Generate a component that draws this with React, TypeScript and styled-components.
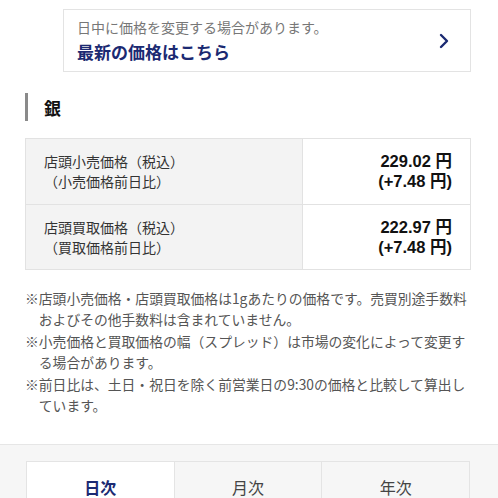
import React from 'react'
import styled, { createGlobalStyle } from 'styled-components'

const GlobalStyle = createGlobalStyle`
    body {
        margin: 0;
        background: #ffffff;
        font-family: "Noto Sans CJK JP", "Noto Sans", sans-serif;
        color: #222222;
    }
`

const Page = styled.div`
    width: 498px;
    height: 498px;
    overflow: hidden;
    display: flex;
    flex-direction: column;
`

const Content = styled.div`
    padding: 9px 27px 0 25px;
    display: flex;
    flex-direction: column;
`

const NoticeCard = styled.a`
    margin-left: 38px;
    height: 63px;
    box-sizing: border-box;
    border: 1px solid #e3e3e3;
    display: flex;
    align-items: center;
    justify-content: space-between;
    padding: 0 20px 0 13px;
    text-decoration: none;
`

const NoticeText = styled.div`
    display: flex;
    flex-direction: column;
`

const NoticeSub = styled.span`
    font-size: 14px;
    line-height: 19px;
    color: #777777;
`

const NoticeLink = styled.span`
    margin-top: 4px;
    font-size: 17px;
    line-height: 22px;
    font-weight: 700;
    color: #1b2a72;
`

const Heading = styled.h2`
    margin: 21px 0 0;
    height: 28px;
    display: flex;
    align-items: center;
    border-left: 3px solid #8a8a8a;
    padding-left: 16px;
    font-size: 17px;
    font-weight: 700;
    color: #111111;
`

const PriceTable = styled.div`
    margin-top: 17px;
    display: grid;
    grid-template-columns: 277px 1fr;
    border-top: 1px solid #e2e2e2;
    border-left: 1px solid #e2e2e2;
`

const Cell = styled.div<{ $head?: boolean }>`
    height: 65.5px;
    box-sizing: border-box;
    border-right: 1px solid #e2e2e2;
    border-bottom: 1px solid #e2e2e2;
    background: ${({ $head }) => ($head ? '#f3f3f3' : '#ffffff')};
    display: flex;
    flex-direction: column;
    justify-content: center;
    align-items: ${({ $head }) => ($head ? 'flex-start' : 'flex-end')};
    padding: ${({ $head }) => ($head ? '0 0 0 18px' : '0 18px 0 0')};
    font-size: ${({ $head }) => ($head ? '14px' : '16.5px')};
    font-weight: ${({ $head }) => ($head ? 400 : 700)};
    line-height: 20px;
    color: ${({ $head }) => ($head ? '#333333' : '#111111')};
    font-family: ${({ $head }) =>
        $head ? '"Noto Sans CJK JP", sans-serif' : '"Liberation Sans", "Noto Sans CJK JP", sans-serif'};
`

const Notes = styled.div`
    margin-top: 18px;
    display: flex;
    flex-direction: column;
`

const Note = styled.p`
    margin: 0;
    padding-left: 1em;
    text-indent: -1em;
    font-size: 13.8px;
    line-height: 21.4px;
    color: #555555;
    white-space: nowrap;
`

const Bottom = styled.div`
    margin-top: 28px;
    flex: 1;
    background: #f6f6f6;
    border-top: 1px solid #e6e6e6;
    padding: 16px 28px 0 26px;
`

const Tabs = styled.div`
    display: grid;
    grid-template-columns: repeat(3, 1fr);
    border-top: 1px solid #e4e4e4;
    border-left: 1px solid #e4e4e4;
`

const Tab = styled.button<{ $active?: boolean }>`
    height: 50px;
    border: none;
    border-right: 1px solid #e4e4e4;
    background: ${({ $active }) => ($active ? '#ffffff' : '#f6f6f6')};
    color: ${({ $active }) => ($active ? '#1b2a72' : '#444444')};
    font-family: "Noto Sans CJK JP", sans-serif;
    font-size: 16px;
    line-height: 20px;
    font-weight: ${({ $active }) => ($active ? 700 : 400)};
    padding: 0;
`

const Chevron = () => (
    <svg width="12" height="18" viewBox="0 0 12 18">
        <path d="M3 3 L9 9 L3 15" fill="none" stroke="#1b2a72" strokeWidth="2.4" strokeLinecap="round" strokeLinejoin="round" />
    </svg>
)

const rows = [
    { label: '店頭小売価格（税込）', sub: '（小売価格前日比）', price: '229.02 円', diff: '(+7.48 円)' },
    { label: '店頭買取価格（税込）', sub: '（買取価格前日比）', price: '222.97 円', diff: '(+7.48 円)' },
]

const App: React.FunctionComponent = () => {
    return (
        <Page>
            <GlobalStyle />
            <Content>
                <NoticeCard href="#">
                    <NoticeText>
                        <NoticeSub>日中に価格を変更する場合があります。</NoticeSub>
                        <NoticeLink>最新の価格はこちら</NoticeLink>
                    </NoticeText>
                    <Chevron />
                </NoticeCard>

                <Heading>銀</Heading>

                <PriceTable>
                    {rows.map((row, index) => (
                        <React.Fragment key={index}>
                            <Cell $head>
                                <span>{row.label}</span>
                                <span>{row.sub}</span>
                            </Cell>
                            <Cell>
                                <span>{row.price}</span>
                                <span>{row.diff}</span>
                            </Cell>
                        </React.Fragment>
                    ))}
                </PriceTable>

                <Notes>
                    <Note>
                        ※店頭小売価格・店頭買取価格は1gあたりの価格です。売買別途手数料
                        <br />
                        およびその他手数料は含まれていません。
                    </Note>
                    <Note>
                        ※小売価格と買取価格の幅（スプレッド）は市場の変化によって変更す
                        <br />
                        る場合があります。
                    </Note>
                    <Note>
                        ※前日比は、土日・祝日を除く前営業日の9:30の価格と比較して算出し
                        <br />
                        ています。
                    </Note>
                </Notes>
            </Content>

            <Bottom>
                <Tabs>
                    <Tab $active>日次</Tab>
                    <Tab>月次</Tab>
                    <Tab>年次</Tab>
                </Tabs>
            </Bottom>
        </Page>
    )
}

export default App
